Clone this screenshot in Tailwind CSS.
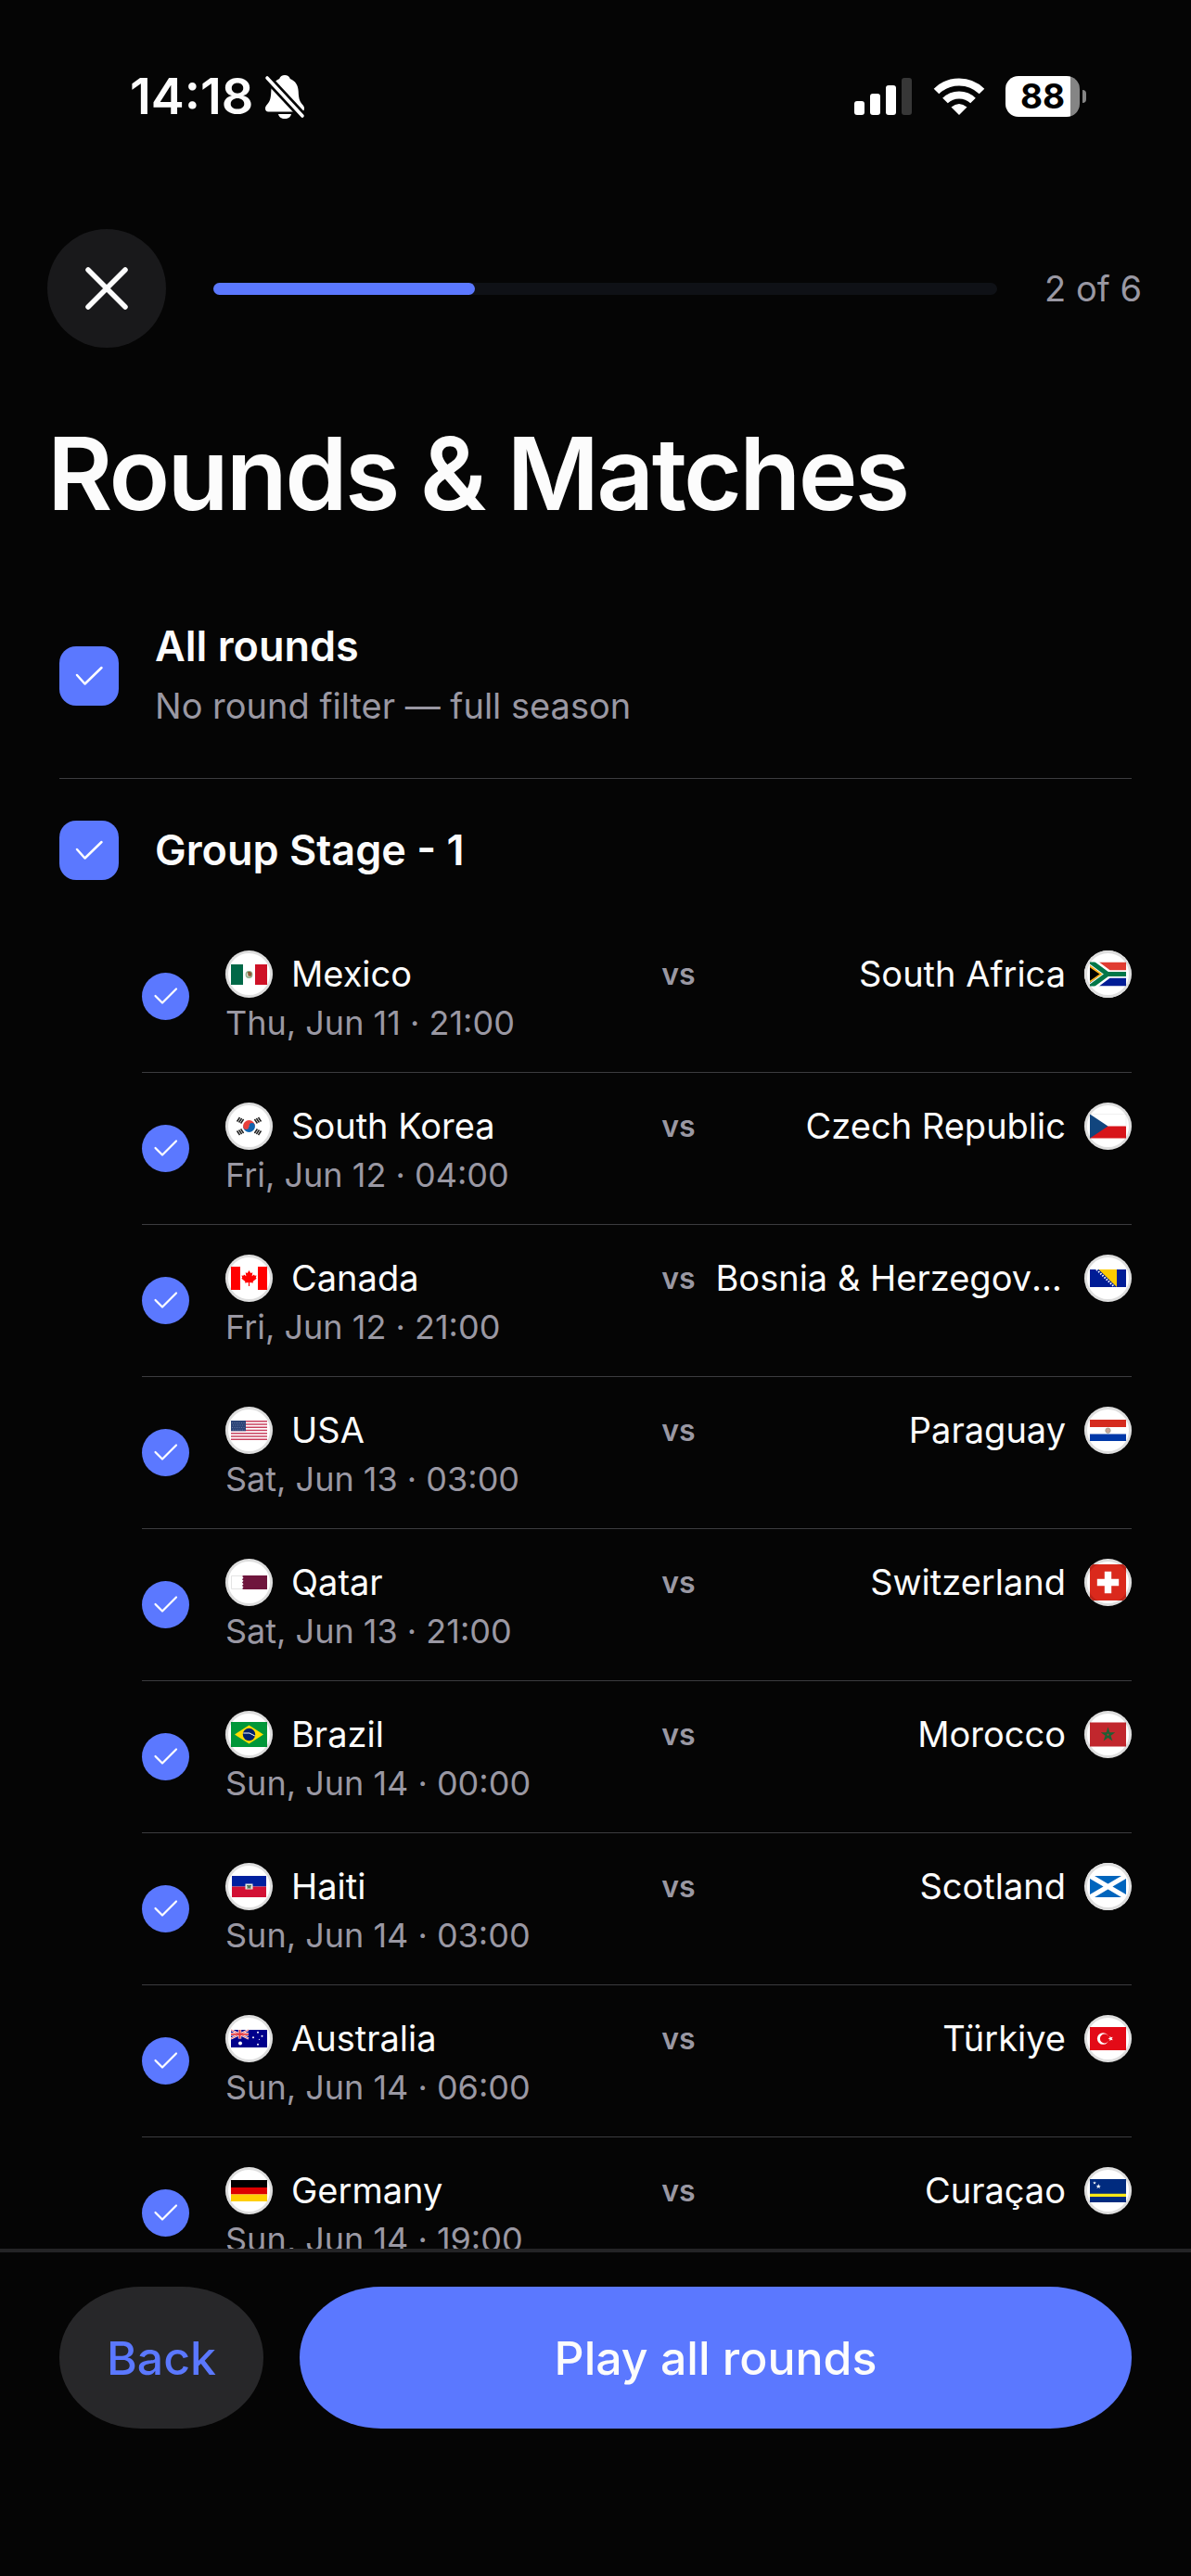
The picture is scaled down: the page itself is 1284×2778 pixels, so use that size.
<!DOCTYPE html>
<html lang="en">
<head>
    <meta charset="UTF-8">
    <meta name="viewport" content="width=device-width, initial-scale=1.0">
    <title>Rounds &amp; Matches</title>
    <script src="https://cdn.jsdelivr.net/npm/@tailwindcss/browser@4"></script>
</head>
<body class="h-screen flex flex-col bg-[#050505] text-[#fcfcfc] font-['Inter','Liberation_Sans',sans-serif]">
    <!-- Flags -->
    <svg class="hidden" aria-hidden="true">
        <symbol id="mx" viewBox="0 0 51 51">
            <path fill="#006847" d="M6 15h13v22H6z"/><path fill="#ce1126" d="M32 15h13v22H32z"/>
            <circle cx="25.500" cy="26" r="3.200" fill="#dfe6d8" stroke="#8fae8b" stroke-width="1.400"/>
            <path fill="#8a5a35" d="M24 23h3l1.500 2-1 3-3-.5z"/>
        </symbol>
        <symbol id="za" viewBox="0 0 51 51">
            <path fill="#e03c31" d="M6 12.500h39v13H6z"/><path fill="#001c96" d="M6 25.500h39v13H6z"/>
            <path fill="none" stroke="#fff" stroke-width="8.600" d="M6 10.500l20 15h19M6 40.500l20-15"/>
            <path fill="none" stroke="#007749" stroke-width="5" d="M6 11.500l19 14h20M6 39.500l19-14"/>
            <path fill="#000" stroke="#ffb81c" stroke-width="1.700" d="M5 16.500l13 9-13 9z"/>
            <path fill="#fff" d="M0 0h51v12.500H0zM0 38.500h51V51H0zM0 0h6v51H0z"/>
        </symbol>
        <symbol id="kr" viewBox="0 0 51 51">
            <path fill="#e8403c" d="M19 25.500a6.500 6.500 0 0 1 13 0z"/><path fill="#0f64af" d="M19 25.500a6.500 6.500 0 0 0 13 0z"/>
            <circle cx="22.300" cy="26" r="3" fill="#e8403c"/><circle cx="28.700" cy="25" r="3" fill="#0f64af"/>
            <g stroke="#222" stroke-width="1.500">
                <path d="M12.500 20.500l3-4.500M14.600 21.500l3-4.500M16.600 22.500l3-4.500"/>
                <path d="M38.500 20.500l-3-4.500M36.400 21.500l-3-4.500M34.400 22.500l-3-4.500"/>
                <path d="M12.500 30.500l3 4.500M14.600 29.500l3 4.500M16.600 28.500l3 4.500"/>
                <path d="M38.500 30.500l-3 4.500M36.400 29.500l-3 4.500M34.400 28.500l-3 4.500"/>
            </g>
        </symbol>
        <symbol id="cz" viewBox="0 0 51 51">
            <path fill="#d7141a" d="M6 25.500h39v13H6z"/><path fill="#11457e" d="M6 12.500l19.500 13L6 38.500z"/>
            <path fill="none" stroke="#eee" stroke-width=".8" d="M6 12.500h39v13"/>
        </symbol>
        <symbol id="ca" viewBox="0 0 51 51">
            <path fill="#f00" d="M6 13h10v25H6zM35 13h10v25H35z"/>
            <path fill="#f00" d="M25.500 17l1.800 3 2-.8-.7 4 2.400-1.800.6 1.300 2-.2-.8 2.300.8.9-4 3.300.4 1.500-3.900-.5v4h-1.200v-4l-3.900.5.4-1.500-4-3.300.8-.9-.8-2.300 2 .2.600-1.300 2.400 1.800-.7-4 2 .8z"/>
        </symbol>
        <symbol id="ba" viewBox="0 0 51 51">
            <path fill="#001c96" d="M6 16h39v19H6z"/><path fill="#fecb00" d="M15.500 16H35v19z"/>
            <path fill="none" stroke="#fff" stroke-width="2" stroke-dasharray="1.500 1.500" d="M13 16l19.500 19"/>
        </symbol>
        <symbol id="us" viewBox="0 0 51 51">
            <path fill="#fff" d="M6 15h39v21H6z"/>
            <path stroke="#c8405e" stroke-width="1.600" d="M6 15.800h39M6 19h39M6 22.200h39M6 25.500h39M6 28.800h39M6 32h39M6 35.200h39"/>
            <path fill="#2c4478" d="M6 15h16v11.300H6z"/>
            <path stroke="#6d7fa6" stroke-width=".8" stroke-dasharray="1 1.500" d="M7 17.500h14M8 20h13M7 22.500h14M8 25h13"/>
        </symbol>
        <symbol id="py" viewBox="0 0 51 51">
            <path fill="#d52b1e" d="M6 14h39v8H6z"/><path fill="#0038a8" d="M6 29.500h39v7.500H6z"/>
            <circle cx="25.500" cy="25.700" r="2.700" fill="#c9a79a" stroke="#9aa08c" stroke-width=".8"/>
        </symbol>
        <symbol id="qa" viewBox="0 0 51 51">
            <path fill="#6f163d" d="M19.500 18H45v15H19.500l-1.500-.8 1.500-1.700-1.500-1.600 1.500-1.700-1.500-1.700 1.500-1.700-1.500-1.600 1.500-1.700-1.500-1.700z"/>
            <path fill="none" stroke="#ddd" stroke-width=".8" d="M18 18.500H6.500v14H18"/>
        </symbol>
        <symbol id="ch" viewBox="0 0 51 51">
            <path fill="#da291c" d="M6 6h39v39H6z"/><path fill="#fff" d="M21.800 13.800h7.400v8h8v7.400h-8v8h-7.400v-8h-8v-7.400h8z"/>
        </symbol>
        <symbol id="br" viewBox="0 0 51 51">
            <path fill="#009739" d="M6 12h39v27H6z"/><path fill="#fedd00" d="M25.500 15.500l15.500 10-15.500 10-15.500-10z"/>
            <circle cx="25.500" cy="25.500" r="6.700" fill="#012169"/>
            <path fill="none" stroke="#fff" stroke-width="1" d="M19.300 24q7-1.500 12.500 3"/>
        </symbol>
        <symbol id="ma" viewBox="0 0 51 51">
            <path fill="#c1272d" d="M6 12.500h39v26H6z"/>
            <path fill="none" stroke="#1c6034" stroke-width="1.500" d="M25.500 20l3.400 10.400-8.900-6.500h11l-8.900 6.500z"/>
        </symbol>
        <symbol id="ht" viewBox="0 0 51 51">
            <path fill="#00209f" d="M7 14h37v11.500H7z"/><path fill="#d21034" d="M7 25.500h37V37H7z"/>
            <path fill="#e8ece4" d="M21.500 22.500h8v6h-8z"/><path fill="#557a5a" d="M23 24h5v1.500h-1.200l1.200 2h-5l1.200-2H23z"/>
        </symbol>
        <symbol id="sc" viewBox="0 0 51 51">
            <path fill="#0065bd" d="M6 14h39v23H6z"/>
            <path stroke="#fff" stroke-width="5" d="M6 14l39 23M45 14L6 37"/>
            <path fill="#fff" d="M0 0h51v14H0zM0 37h51v14H0z"/>
        </symbol>
        <symbol id="au" viewBox="0 0 51 51">
            <path fill="#00008b" d="M6 16h39v19H6z"/>
            <path stroke="#fff" stroke-width="2.200" d="M6 16l19 9.500M25 16L6 25.500"/>
            <path stroke="#fff" stroke-width="3.400" d="M15.500 16v9.500M6 20.800h19"/>
            <path stroke="#e4383f" stroke-width=".8" d="M6 16l19 9.500M25 16L6 25.500"/>
            <path stroke="#e4383f" stroke-width="2" d="M15.500 16v9.500M6 20.800h19"/>
            <g fill="#fff"><circle cx="16" cy="30.500" r="2"/><circle cx="35" cy="18.800" r="1"/><circle cx="30" cy="24.300" r="1"/><circle cx="39.500" cy="22.800" r="1"/><circle cx="36.500" cy="26.300" r=".6"/><circle cx="35" cy="31.800" r="1"/></g>
        </symbol>
        <symbol id="tr" viewBox="0 0 51 51">
            <path fill="#e30a17" d="M6 13h39v25H6z"/>
            <circle cx="20.200" cy="25.500" r="6.300" fill="#fff"/><circle cx="21.900" cy="25.500" r="5" fill="#e30a17"/>
            <path fill="#fff" d="M25.500 25.500l2-.7v-2.100l1.300 1.600 2-.6-1.200 1.800 1.200 1.800-2-.6-1.300 1.600v-2.100z"/>
        </symbol>
        <symbol id="de" viewBox="0 0 51 51">
            <path d="M6 14h39v8H6z"/><path fill="#d00" d="M6 22h39v7.500H6z"/><path fill="#ffce00" d="M6 29.500h39V37H6z"/>
        </symbol>
        <symbol id="cw" viewBox="0 0 51 51">
            <path fill="#002b7f" d="M6 13h39v25H6z"/><path fill="#f9e814" d="M6 28.800h39v3.200H6z"/>
            <path fill="#fff" d="M11 15.200l.5 1.300h1.400l-1.100.8.400 1.300-1.200-.8-1.200.8.400-1.300-1.100-.8h1.400zM15.200 18l.7 1.900h2l-1.600 1.200.6 1.900-1.700-1.100-1.700 1.100.6-1.900-1.600-1.200h2z"/>
        </symbol>
    </svg>

    <!-- Status Bar -->
    <div class="flex items-center justify-between pt-[72px] pl-[140px] pr-[113px]">
        <div class="flex items-center gap-3">
            <span class="text-[54px] leading-[64px] font-semibold">14:18</span>
            <svg class="w-[44px] h-[48px]" viewBox="0 0 44 48" fill="#fff">
                <path d="M22 1c2.800 0 5 1.500 5.800 4 5.700 2.200 8.700 7.200 8.900 13.500.3 9.500 2 11.500 5 15 1 1.200 1.300 2.300 1.300 3.500 0 2-1.200 3.500-3.200 3.500H4.200C2.200 40.500 1 39 1 37c0-1.200.3-2.300 1.300-3.500 3-3.500 4.700-5.500 5-15C7.500 12.200 10.500 7.200 16.200 5 17 2.500 19.200 1 22 1z"/>
                <path d="M15 43h14c-.5 3-3.300 5-7 5s-6.500-2-7-5z"/>
                <path stroke="#050505" stroke-width="9" stroke-linecap="round" d="M3 4l38 41"/>
                <path stroke="#fff" stroke-width="3.600" stroke-linecap="round" d="M3 4l38 41"/>
            </svg>
        </div>
        <div class="flex items-center gap-[22px]">
            <svg class="w-[63px] h-[40px]" viewBox="0 0 63 40" fill="#fff">
                <rect x="0" y="25" width="11" height="15" rx="3"/>
                <rect x="17" y="17" width="11" height="23" rx="3"/>
                <rect x="34" y="8" width="11" height="32" rx="3"/>
                <rect x="51" y="0" width="11" height="40" rx="3" fill="#373737"/>
            </svg>
            <svg class="w-[56px] h-[40px]" viewBox="0 0 56 40" fill="none" stroke="#fff" stroke-width="8">
                <path d="M3.500 14.500a35 35 0 0 1 49 0"/>
                <path d="M13 24.500a21.500 21.500 0 0 1 30 0"/>
                <path fill="#fff" stroke="none" d="M28 40l-8.500-8.500q8.500-7 17 0z"/>
            </svg>
            <div class="flex items-center gap-[3px]">
                <div class="flex items-center justify-center w-[80px] h-[44px] rounded-[14px] bg-linear-to-r from-white from-[87%] to-[#858585] to-[87%]">
                    <span class="text-[37px] leading-[44px] font-bold text-black">88</span>
                </div>
                <div class="w-[4px] h-[14px] rounded-r-full bg-[#858585]"></div>
            </div>
        </div>
    </div>

    <!-- Progress -->
    <header class="flex items-center mt-[111px] pl-[51px] pr-[53px] gap-[51px]">
        <button type="button" aria-label="Close" class="flex items-center justify-center size-32 rounded-full bg-[#19191b]">
            <svg class="size-12" viewBox="0 0 48 48" stroke="#fcfcfc" stroke-width="5.500" stroke-linecap="round">
                <path d="M4 4l40 40M44 4L4 44"/>
            </svg>
        </button>
        <div class="flex-1 h-[13px] rounded-full bg-[#0f1116]">
            <div class="w-1/3 h-full rounded-full bg-[#5b78ff]"></div>
        </div>
        <span class="text-[38px] leading-[48px] text-[#9a98a3]">2 of 6</span>
    </header>

    <h1 class="mt-[68px] px-[51px] text-[108px] leading-[136px] font-semibold tracking-tight">Rounds &amp; Matches</h1>

    <!-- Rounds -->
    <main class="flex-1 min-h-0 overflow-hidden mt-[39px] px-16">
        <label class="flex items-center gap-[39px] h-[222px] border-b border-[#3c3c3f]">
            <span class="grid shrink-0">
                <input type="checkbox" checked class="appearance-none col-start-1 row-start-1 size-16 rounded-[18px] bg-[#5b78ff]">
                <svg class="col-start-1 row-start-1 size-16 pointer-events-none" viewBox="0 0 64 64" fill="none" stroke="#fff" stroke-width="2.500" stroke-linecap="round" stroke-linejoin="round"><path d="M19 31l8.500 9.500L45.500 23"/></svg>
            </span>
            <span class="flex flex-col">
                <span class="text-[45px] leading-[64px] font-semibold">All rounds</span>
                <span class="text-[38px] leading-[64px] text-[#9a98a3]">No round filter — full season</span>
            </span>
        </label>
        <label class="flex items-center gap-[39px] h-[153px]">
            <span class="grid shrink-0">
                <input type="checkbox" checked class="appearance-none col-start-1 row-start-1 size-16 rounded-[18px] bg-[#5b78ff]">
                <svg class="col-start-1 row-start-1 size-16 pointer-events-none" viewBox="0 0 64 64" fill="none" stroke="#fff" stroke-width="2.500" stroke-linecap="round" stroke-linejoin="round"><path d="M19 31l8.500 9.500L45.500 23"/></svg>
            </span>
            <span class="text-[45px] leading-[64px] font-semibold">Group Stage - 1</span>
        </label>
        <ul id="matches" class="pl-[89px]"></ul>
    </main>

    <!-- Actions -->
    <footer class="flex gap-[39px] border-t-4 border-[#242426] px-16 pt-[37px] pb-[159px]">
        <button type="button" class="w-[220px] h-[153px] rounded-[88px/76px] bg-[#272729] text-[#5b78ff] text-[50px] leading-[64px] font-medium">Back</button>
        <button type="button" class="flex-1 h-[153px] rounded-[88px/76px] bg-[#5b78ff] text-[50px] leading-[64px] font-medium">Play all rounds</button>
    </footer>

    <script>
        const matches = [
            { home: ['mx', 'Mexico'], away: ['za', 'South Africa'], date: 'Thu, Jun 11 · 21:00' },
            { home: ['kr', 'South Korea'], away: ['cz', 'Czech Republic'], date: 'Fri, Jun 12 · 04:00' },
            { home: ['ca', 'Canada'], away: ['ba', 'Bosnia & Herzegovina'], date: 'Fri, Jun 12 · 21:00' },
            { home: ['us', 'USA'], away: ['py', 'Paraguay'], date: 'Sat, Jun 13 · 03:00' },
            { home: ['qa', 'Qatar'], away: ['ch', 'Switzerland'], date: 'Sat, Jun 13 · 21:00' },
            { home: ['br', 'Brazil'], away: ['ma', 'Morocco'], date: 'Sun, Jun 14 · 00:00' },
            { home: ['ht', 'Haiti'], away: ['sc', 'Scotland'], date: 'Sun, Jun 14 · 03:00' },
            { home: ['au', 'Australia'], away: ['tr', 'Türkiye'], date: 'Sun, Jun 14 · 06:00' },
            { home: ['de', 'Germany'], away: ['cw', 'Curaçao'], date: 'Sun, Jun 14 · 19:00' },
        ];

        const flag = code => `
            <svg class="shrink-0 size-[51px] rounded-full bg-white" viewBox="0 0 51 51" aria-hidden="true">
                <use href="#${code}"/>
                <circle cx="25.5" cy="25.5" r="24" fill="none" stroke="#000" stroke-opacity=".13" stroke-width="3"/>
            </svg>`;

        document.getElementById('matches').innerHTML = matches.map(m => `
            <li class="h-[164px] border-b border-[#3c3c3f]">
                <label class="flex gap-[39px] pt-[32px]">
                    <span class="grid shrink-0 self-start mt-6">
                        <input type="checkbox" checked class="appearance-none col-start-1 row-start-1 size-[51px] rounded-full bg-[#5b78ff]">
                        <svg class="col-start-1 row-start-1 size-[51px] pointer-events-none" viewBox="0 0 51 51" fill="none" stroke="#fff" stroke-width="2.2" stroke-linecap="round" stroke-linejoin="round"><path d="M14.500 25l7.500 7.500 15-15"/></svg>
                    </span>
                    <span class="flex-1 min-w-0">
                        <span class="flex items-center">
                            <span class="flex-1 min-w-0 flex items-center gap-5">
                                ${flag(m.home[0])}
                                <span class="truncate text-[38px] leading-[51px]">${m.home[1]}</span>
                            </span>
                            <span class="w-20 shrink-0 text-center text-[32px] leading-[51px] font-semibold text-[#9a98a3]">vs</span>
                            <span class="flex-1 min-w-0 flex items-center justify-end gap-5">
                                <span class="truncate text-[38px] leading-[51px]">${m.away[1].replace('&', '&amp;')}</span>
                                ${flag(m.away[0])}
                            </span>
                        </span>
                        <span class="block text-[36px] leading-[54px] text-[#9a98a3]">${m.date}</span>
                    </span>
                </label>
            </li>`).join('');
    </script>
</body>
</html>
